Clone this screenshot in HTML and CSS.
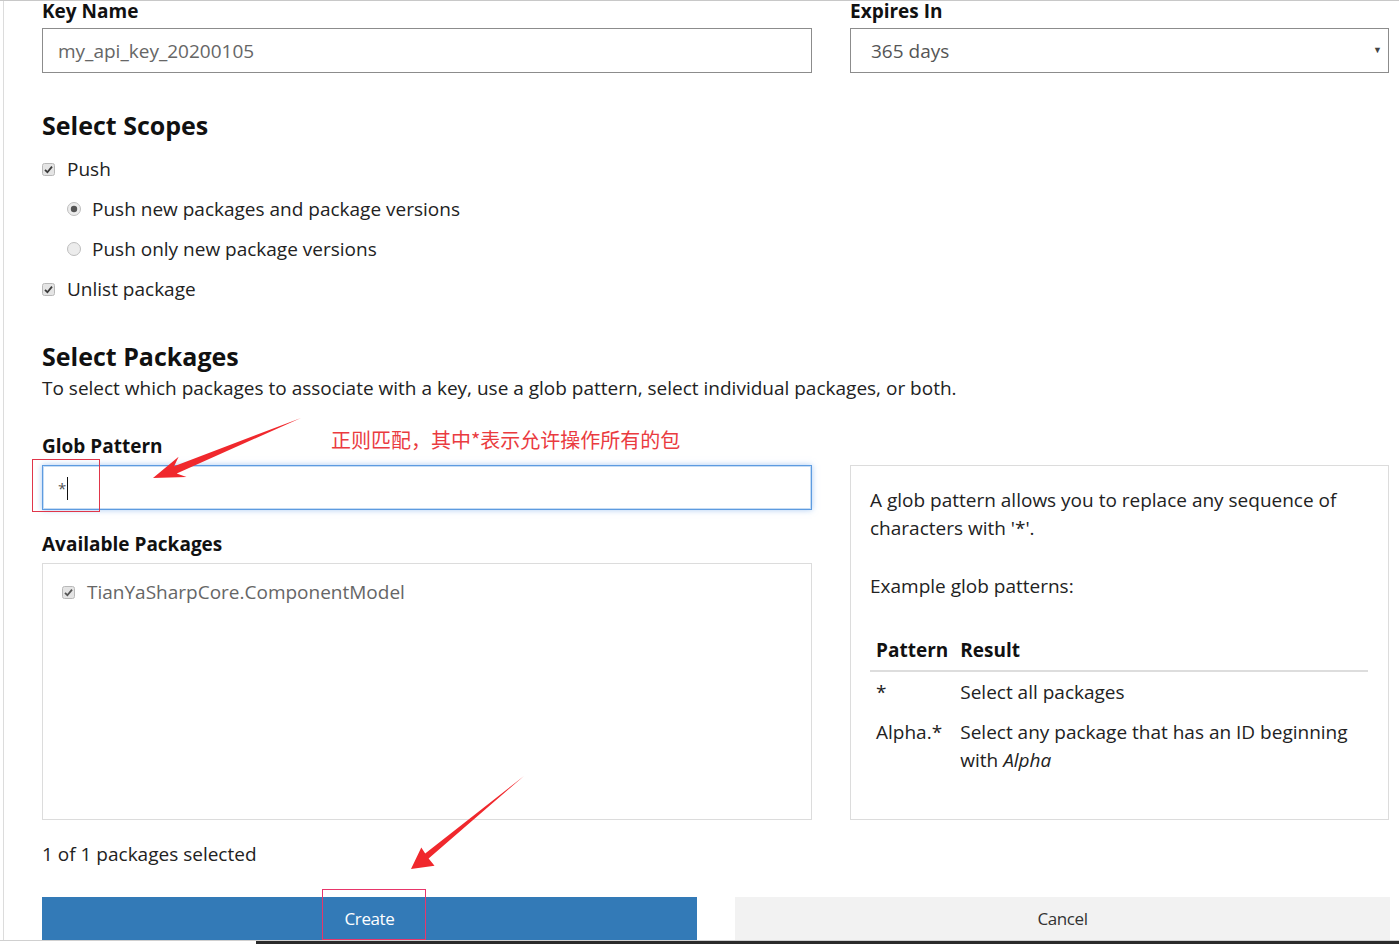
FILE: index.html
```html
<!DOCTYPE html>
<html lang="en">
<head>
<meta charset="utf-8">
<title>Create API Key</title>
<link rel="stylesheet" href="styles.css">
</head>
<body>
<div class="frame">
  <div class="page">
    <div class="cols top-row">
      <div class="field">
        <div class="label">Key Name</div>
        <div class="input">my_api_key_20200105</div>
      </div>
      <div class="field">
        <div class="label">Expires In</div>
        <div class="input select">365 days<span class="caret-down">&#9660;</span></div>
      </div>
    </div>

    <h2 class="heading scopes-heading">Select Scopes</h2>
    <div class="opt">
      <span class="cb"><svg width="13" height="13" viewBox="0 0 13 13"><rect x="0.5" y="0.5" width="12" height="12" rx="2" fill="#e4e4e4" stroke="#b8b8b8"/><path d="M3 6.8 L5.4 9.2 L10 3.6" fill="none" stroke="#3a3a3a" stroke-width="1.8"/></svg></span>
      <span>Push</span>
    </div>
    <div class="opt sub">
      <span class="rb"><svg width="14" height="14" viewBox="0 0 14 14"><circle cx="7" cy="7" r="6.5" fill="#ececec" stroke="#bdbdbd"/><circle cx="7" cy="7" r="3.2" fill="#555"/></svg></span>
      <span>Push new packages and package versions</span>
    </div>
    <div class="opt sub">
      <span class="rb"><svg width="14" height="14" viewBox="0 0 14 14"><circle cx="7" cy="7" r="6.5" fill="#ececec" stroke="#bdbdbd"/></svg></span>
      <span>Push only new package versions</span>
    </div>
    <div class="opt">
      <span class="cb"><svg width="13" height="13" viewBox="0 0 13 13"><rect x="0.5" y="0.5" width="12" height="12" rx="2" fill="#e4e4e4" stroke="#b8b8b8"/><path d="M3 6.8 L5.4 9.2 L10 3.6" fill="none" stroke="#3a3a3a" stroke-width="1.8"/></svg></span>
      <span>Unlist package</span>
    </div>

    <h2 class="heading packages-heading">Select Packages</h2>
    <p class="desc">To select which packages to associate with a key, use a glob pattern, select individual packages, or both.</p>

    <div class="cols pkg-row">
      <div class="left">
        <div class="label glob-label">Glob Pattern<span class="note">正则匹配，其中*表示允许操作所有的包</span></div>
        <div class="input glob"><span class="star">*</span><span class="text-caret"></span><span class="mark mark-glob"></span></div>
        <div class="label avail-label">Available Packages</div>
        <div class="pkg-box">
          <div class="pkg">
            <span class="cb"><svg width="13" height="13" viewBox="0 0 13 13"><rect x="0.5" y="0.5" width="12" height="12" rx="2" fill="#e4e4e4" stroke="#b8b8b8"/><path d="M3 6.8 L5.4 9.2 L10 3.6" fill="none" stroke="#555" stroke-width="1.8"/></svg></span>
            <span>TianYaSharpCore.ComponentModel</span>
          </div>
        </div>
        <div class="count">1 of 1 packages selected</div>
      </div>
      <div class="right">
        <div class="info">
          <p class="info-p">A glob pattern allows you to replace any sequence of characters with '*'.</p>
          <p class="info-p ex">Example glob patterns:</p>
          <table class="tbl">
            <thead><tr><th class="c1">Pattern</th><th>Result</th></tr></thead>
            <tbody>
              <tr><td class="c1">*</td><td>Select all packages</td></tr>
              <tr><td class="c1">Alpha.*</td><td>Select any package that has an ID beginning with <em>Alpha</em></td></tr>
            </tbody>
          </table>
        </div>
      </div>
    </div>

    <div class="buttons">
      <div class="btn btn-primary">Create<span class="mark mark-create"></span></div>
      <div class="btn btn-default">Cancel</div>
    </div>
  </div>
  <div class="bottom-edge"><span class="edge-light"></span><span class="edge-dark"></span></div>

  <svg class="arrows" width="1399" height="944" viewBox="0 0 1399 944">
    <polygon fill="#f0282d" points="301,418 176.7,473.5 186.5,477 153,478 178.6,456.8 174.1,466.2"/>
    <polygon fill="#f0282d" points="524,776 428.6,858.6 434.5,865.8 411,869 421.3,847.6 425.2,853.6"/>
  </svg>
</div>
</body>
</html>
```

FILE: styles.css
```css
* { box-sizing: border-box; }
html, body { margin: 0; padding: 0; background: #fff; }
body {
  font-family: "Open Sans", "Noto Sans", sans-serif;
  font-size: 19px;
  color: #222;
  width: 1399px;
  height: 944px;
  overflow: hidden;
}
.frame {
  position: relative;
  width: 1399px;
  height: 944px;
  border-top: 1px solid #c8c8c8;
}
.page {
  margin-left: 3px;
  border-left: 1px solid #dcdcdc;
  padding-left: 38px;
  height: 939px;
}
.cols {
  display: grid;
  grid-template-columns: 770px 539px;
  column-gap: 38px;
}
.label {
  font-weight: 700;
  font-size: 19px;
  line-height: 24px;
  color: #111;
}
.top-row .label { margin-top: -2px; margin-bottom: 5px; }
.input {
  position: relative;
  height: 45px;
  border: 1px solid #8c8c8c;
  padding-left: 15px;
  padding-top: 1px;
  display: flex;
  align-items: center;
  font-size: 19px;
  color: #666;
}
.select { color: #555; padding-left: 20px; }
.caret-down {
  position: absolute;
  right: 6px;
  top: 14px;
  font-size: 9px;
  color: #444;
}
.heading {
  margin: 0;
  font-size: 25px;
  font-weight: 700;
  line-height: 30px;
  color: #111;
}
.scopes-heading { margin-top: 37px; margin-bottom: 9px; }
.opt {
  height: 40px;
  display: flex;
  align-items: center;
  line-height: 26px;
}
.opt .cb { width: 25px; display: flex; }
.opt.sub { padding-left: 25px; }
.opt .rb { width: 25px; display: flex; }
.packages-heading { margin-top: 32px; }
.desc {
  margin: 4px 0 0;
  line-height: 26px;
}
.pkg-row { margin-top: 33px; }
.glob-label { position: relative; margin-bottom: 7px; }
.note {
  position: absolute;
  left: 289px;
  top: -6px;
  font-family: "Noto Sans CJK SC", sans-serif;
  font-weight: 400;
  font-size: 20px;
  color: #ea3b3f;
  white-space: nowrap;
}
.glob {
  border-color: #5d9be0;
  box-shadow: 0 0 6px rgba(102, 160, 233, 0.55), inset 0 0 0 1px rgba(93, 155, 224, 0.35);
  color: #555;
  overflow: visible;
}
.star {
  font-size: 15px;
  align-self: flex-start;
  margin-top: 11px;
}
.text-caret {
  display: inline-block;
  width: 1px;
  height: 23px;
  background: #111;
  margin-left: 1px;
}
.mark {
  position: absolute;
  border: 1px solid #e0364a;
  pointer-events: none;
}
.mark-glob { left: -11px; top: -7px; width: 68px; height: 53px; }
.avail-label { margin-top: 22px; margin-bottom: 7px; }
.pkg-box {
  height: 257px;
  border: 1px solid #dcdcdc;
  padding: 15px 0 0 19px;
}
.pkg {
  display: flex;
  align-items: center;
  line-height: 26px;
  color: #666;
}
.pkg .cb { width: 25px; display: flex; }
.count {
  margin-top: 21px;
  line-height: 26px;
}
.right { padding-top: 31px; }
.info {
  height: 355px;
  border: 1px solid #dcdcdc;
  padding: 20px 20px 0 19px;
}
.info-p { margin: 0; line-height: 28px; }
.info-p.ex { margin-top: 30px; }
.tbl {
  margin-top: 30px;
  width: 100%;
  border-collapse: collapse;
}
.tbl th, .tbl td {
  text-align: left;
  vertical-align: top;
  padding: 6px 6px;
  line-height: 28px;
}
.tbl th { font-weight: 700; border-bottom: 2px solid #ddd; color: #111; }
.tbl .c1 { width: 80px; }
.buttons {
  margin-top: 30px;
  display: grid;
  grid-template-columns: 655px 655px;
  column-gap: 38px;
}
.btn {
  position: relative;
  height: 43px;
  display: flex;
  align-items: center;
  justify-content: center;
  font-size: 17px;
  letter-spacing: -0.4px;
}
.btn-primary { background: #337ab7; color: #fff; }
.btn-default { background: #f2f2f2; color: #333; }
.mark-create { left: 280px; top: -8px; width: 104px; height: 51px; border-color: #e8366a; z-index: 1; }
.bottom-edge {
  display: flex;
  height: 4px;
  border-top: 1px solid #d0d0d0;
}
.edge-light { width: 256px; background: #fff; }
.edge-dark { flex: 1; background: #2b2b2b; }
.arrows {
  position: absolute;
  left: 0;
  top: -1px;
  pointer-events: none;
}
```
